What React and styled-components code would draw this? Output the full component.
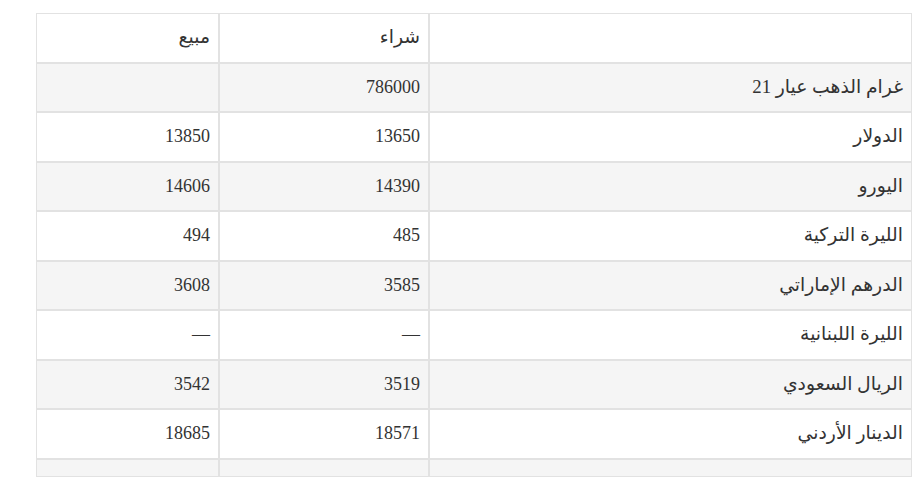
import React from "react";
import styled, { createGlobalStyle } from "styled-components";

const Global = createGlobalStyle`
  html, body { margin: 0; padding: 0; background: #fff; }
  body { font-family: "Liberation Serif", "DejaVu Sans", serif; color: #333; }
`;

const Page = styled.div`
  padding: 13px 10px 0 36px;
`;

const Table = styled.table`
  direction: rtl;
  width: 876px;
  border-collapse: separate;
  border-spacing: 0;
  table-layout: fixed;
  font-size: 18px;
  line-height: 31.5px;
`;

const Row = styled.tr`
  background: ${(p) => (p.$striped ? "#f5f5f5" : "#ffffff")};
`;

const Cell = styled.td`
  border: 1px solid #e2e2e2;
  padding: 8px 8px;
  text-align: right;
  font-weight: normal;
  color: #333;
  white-space: nowrap;
`;

const Label = styled.span`
  font-size: 18.8px;
  line-height: 20px;
`;

const rows = [
  ["غرام الذهب عيار 21", "786000", ""],
  ["الدولار", "13650", "13850"],
  ["اليورو", "14390", "14606"],
  ["الليرة التركية", "485", "494"],
  ["الدرهم الإماراتي", "3585", "3608"],
  ["الليرة اللبنانية", "—", "—"],
  ["الريال السعودي", "3519", "3542"],
  ["الدينار الأردني", "18571", "18685"],
];

export default function App() {
  return (
    <Page>
      <Global />
      <Table>
        <colgroup>
          <col style={{ width: "483px" }} />
          <col style={{ width: "210px" }} />
          <col style={{ width: "183px" }} />
        </colgroup>
        <thead>
          <Row>
            <Cell as="th"></Cell>
            <Cell as="th"><Label>شراء</Label></Cell>
            <Cell as="th"><Label>مبيع</Label></Cell>
          </Row>
        </thead>
        <tbody>
          {rows.map((r, i) => (
            <Row key={i} $striped={i % 2 === 0}>
              <Cell><Label>{r[0]}</Label></Cell>
              <Cell>{r[1]}</Cell>
              <Cell>{r[2]}</Cell>
            </Row>
          ))}
          <Row $striped>
            <Cell></Cell>
            <Cell></Cell>
            <Cell></Cell>
          </Row>
        </tbody>
      </Table>
    </Page>
  );
}
